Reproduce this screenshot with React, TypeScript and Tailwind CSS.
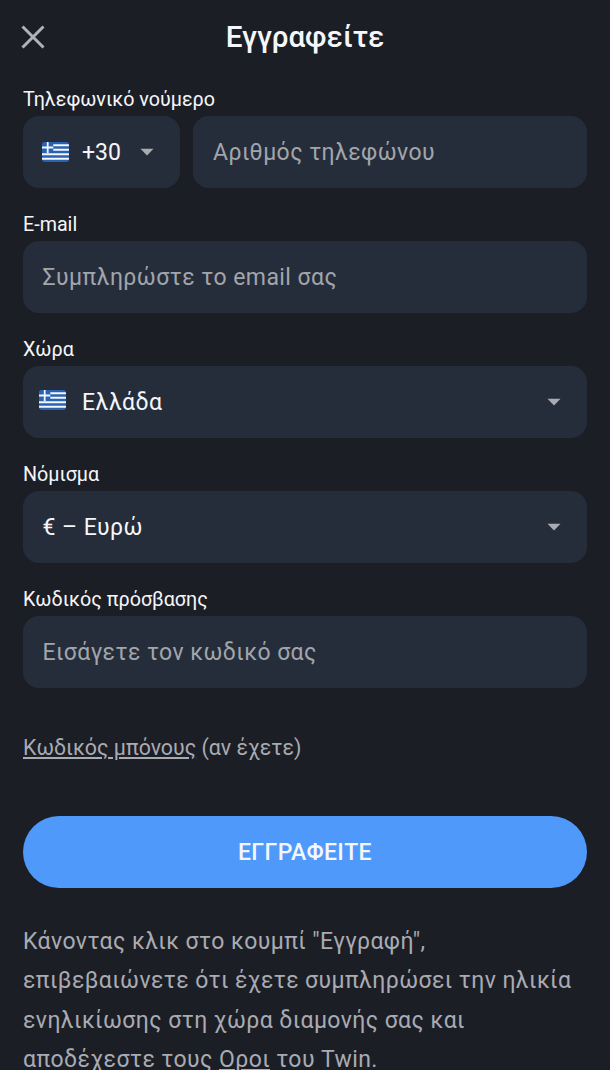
import type { ReactNode } from 'react';

function Flag({ className = '' }: { className?: string }) {
  return (
    <svg width="27" height="20" viewBox="0 0 27 18" preserveAspectRatio="none" className={`shrink-0 rounded-[3px] ${className}`}>
      <rect width="27" height="18" fill="#2a62b2" />
      <path d="M0 3h27M0 7h27M0 11h27M0 15h27" stroke="#f3f6fb" strokeWidth="1.8" />
      <path d="M0 0h11.3v10H0z" fill="#2a62b2" />
      <path d="M5.7 0v10M0 5h11.3" stroke="#f3f6fb" strokeWidth="1.8" />
    </svg>
  );
}

function Caret() {
  return (
    <svg width="14" height="8" viewBox="0 0 14 8" className="shrink-0">
      <path d="M0.5 0.7h13L7 7.5z" fill="#a8abb1" />
    </svg>
  );
}

function Field({ label, children }: { label: string; children: ReactNode }) {
  return (
    <div className="flex h-[125px] flex-col">
      <div className="h-[29px] text-[19.7px] leading-[25px]">{label}</div>
      {children}
    </div>
  );
}

const box = 'flex h-[72px] items-center rounded-[16px] bg-[#262d3a] text-[23px] tracking-[0.44px]';

export default function App() {
  return (
    <main className="h-[1070px] w-[610px] overflow-hidden bg-[#1c1e26] px-[23px] font-[Roboto,sans-serif] text-[#f5f6fa]">
      <header className="grid h-[87px] grid-cols-[24px_1fr_24px] items-start">
        <svg width="24" height="24" viewBox="0 0 24 24" className="-ml-[2px] mt-[25px]">
          <path d="M1.5 1.5l21 21M22.5 1.5l-21 21" stroke="#b0b2b7" strokeWidth="3" />
        </svg>
        <h1 className="mt-[17px] text-center text-[29.6px] font-medium leading-[40px]">Εγγραφείτε</h1>
      </header>
      <Field label="Τηλεφωνικό νούμερο">
        <div className="flex gap-[13px]">
          <div className={`${box} w-[157px] pl-[19px]`}>
            <Flag />
            <span className="ml-[13px] mr-[19px] pt-[2px] tracking-normal">+30</span>
            <Caret />
          </div>
          <div className={`${box} flex-1 pl-[20px] pt-[2px] text-[#a1a5ac]`}>Αριθμός τηλεφώνου</div>
        </div>
      </Field>
      <Field label="E-mail">
        <div className={`${box} pl-[19.5px] pt-[2px] text-[#a1a5ac]`}>Συμπληρώστε το email σας</div>
      </Field>
      <Field label="Χώρα">
        <div className={`${box} pl-[16px] pr-[26px]`}>
          <Flag className="-mt-[4px]" />
          <span className="ml-[16px] flex-1 pt-[2px]">Ελλάδα</span>
          <Caret />
        </div>
      </Field>
      <Field label="Νόμισμα">
        <div className={`${box} pl-[19.5px] pr-[26px]`}>
          <span className="flex-1 pt-[2px]">€ – Ευρώ</span>
          <Caret />
        </div>
      </Field>
      <Field label="Κωδικός πρόσβασης">
        <div className={`${box} pl-[19.5px] pt-[2px] text-[#a1a5ac]`}>Εισάγετε τον κωδικό σας</div>
      </Field>
      <p className="mt-[21px] h-[83px] text-[21.35px] leading-[30px] text-[#a9abb2]">
        <span className="underline">Κωδικός μπόνους</span> (αν έχετε)
      </p>
      <button className="block h-[72px] w-full rounded-full bg-[#4f99fb] pt-[2px] text-[23px] font-medium tracking-[0.38px]">ΕΓΓΡΑΦΕΙΤΕ</button>
      <p className="mt-[34px] whitespace-nowrap text-[23px] leading-[39.4px] tracking-[0.42px] text-[#a9abb2]">
        Κάνοντας κλικ στο κουμπί "Εγγραφή",<br />
        επιβεβαιώνετε ότι έχετε συμπληρώσει την ηλικία<br />
        ενηλικίωσης στη χώρα διαμονής σας και<br />
        αποδέχεστε τους <span className="underline">Οροι</span> του Twin.
      </p>
    </main>
  );
}
